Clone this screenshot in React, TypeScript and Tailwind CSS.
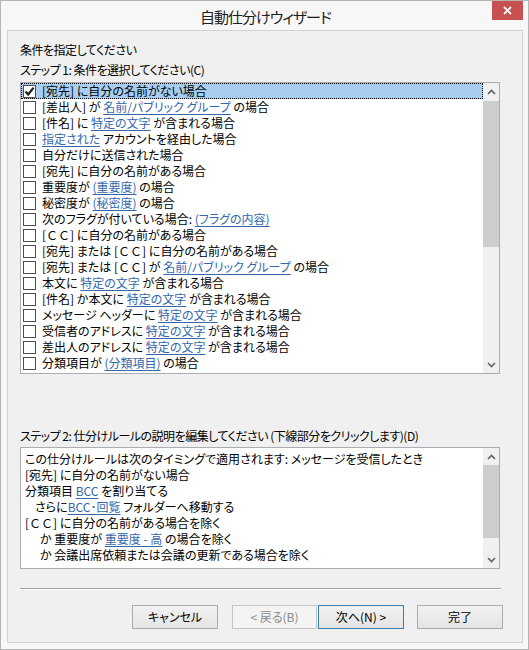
import React from 'react';

type Seg = string | { l: string };

const FONT = "[font-family:'Noto_Sans_CJK_JP',sans-serif] [font-feature-settings:'palt']";
const LINK = 'text-[#3467ad] underline underline-offset-[2px] decoration-[#3467ad]';

const conditions: Seg[][] = [
  ['[宛先] に自分の名前がない場合'],
  ['[差出人] が ', { l: '名前/パブリック グループ' }, ' の場合'],
  ['[件名] に ', { l: '特定の文字' }, ' が含まれる場合'],
  [{ l: '指定された' }, ' アカウントを経由した場合'],
  ['自分だけに送信された場合'],
  ['[宛先] に自分の名前がある場合'],
  ['重要度が ', { l: '(重要度)' }, ' の場合'],
  ['秘密度が ', { l: '(秘密度)' }, ' の場合'],
  ['次のフラグが付いている場合: ', { l: '(フラグの内容)' }],
  ['[ＣＣ] に自分の名前がある場合'],
  ['[宛先] または [ＣＣ] に自分の名前がある場合'],
  ['[宛先] または [ＣＣ] が ', { l: '名前/パブリック グループ' }, ' の場合'],
  ['本文に ', { l: '特定の文字' }, ' が含まれる場合'],
  ['[件名] か本文に ', { l: '特定の文字' }, ' が含まれる場合'],
  ['メッセージ ヘッダーに ', { l: '特定の文字' }, ' が含まれる場合'],
  ['受信者のアドレスに ', { l: '特定の文字' }, ' が含まれる場合'],
  ['差出人のアドレスに ', { l: '特定の文字' }, ' が含まれる場合'],
  ['分類項目が ', { l: '(分類項目)' }, ' の場合'],
];

const description: { indent: string; segs: Seg[] }[] = [
  { indent: '', segs: ['この仕分けルールは次のタイミングで適用されます: メッセージを受信したとき'] },
  { indent: '', segs: ['[宛先] に自分の名前がない場合'] },
  { indent: '', segs: ['分類項目 ', { l: 'BCC' }, ' を割り当てる'] },
  { indent: 'pl-[10px]', segs: ['さらに', { l: 'BCC･回覧' }, ' フォルダーへ移動する'] },
  { indent: '', segs: ['[ＣＣ] に自分の名前がある場合を除く'] },
  { indent: 'pl-[15px]', segs: ['か 重要度が ', { l: '重要度 - 高' }, ' の場合を除く'] },
  { indent: 'pl-[15px]', segs: ['か 会議出席依頼または会議の更新である場合を除く'] },
];

// full-width "ＣＣ" keeps its full width, like the original dialog
const Plain = ({ text }: { text: string }) => {
  const parts = text.split('ＣＣ');
  return (
    <span className="whitespace-pre">
      {parts.map((p, i) => (
        <React.Fragment key={i}>
          {p}
          {i < parts.length - 1 && (
            <span className="[font-feature-settings:normal]">ＣＣ</span>
          )}
        </React.Fragment>
      ))}
    </span>
  );
};

const Segs = ({ segs }: { segs: Seg[] }) => (
  <>
    {segs.map((s, i) =>
      typeof s === 'string' ? (
        <Plain key={i} text={s} />
      ) : (
        <span key={i} className={LINK}>{s.l}</span>
      )
    )}
  </>
);

const Chevron = ({ up }: { up?: boolean }) => (
  <svg width="9" height="6" viewBox="0 0 9 6">
    <path
      d={up ? 'M1 5 L4.5 1.5 L8 5' : 'M1 1 L4.5 4.5 L8 1'}
      fill="none"
      stroke="#606060"
      strokeWidth="1.6"
    />
  </svg>
);

const ScrollBar = ({ thumbTop, thumbH }: { thumbTop: string; thumbH: string }) => (
  <div className="w-[16px] h-full bg-[#f0f0f0] flex flex-col">
    <div className="h-[17px] flex items-center justify-center">
      <Chevron up />
    </div>
    <div className={`${thumbTop} ${thumbH} bg-[#cdcdcd]`} />
    <div className="flex-1" />
    <div className="h-[17px] flex items-center justify-center">
      <Chevron />
    </div>
  </div>
);

const CheckBox = ({ checked }: { checked?: boolean }) => (
  <div className="ml-[2px] w-[13px] h-[13px] shrink-0 border border-[#4d4d4d] bg-white flex items-center justify-center">
    {checked && (
      <svg width="11" height="11" viewBox="0 0 11 11">
        <path d="M1.5 5.5 L4.2 8.5 L9.5 1.8" fill="none" stroke="#222" strokeWidth="2.2" />
      </svg>
    )}
  </div>
);

const Button = ({
  label,
  w,
  variant,
}: {
  label: string;
  w: string;
  variant?: 'default' | 'disabled';
}) => {
  const tone =
    variant === 'disabled'
      ? 'border-[#c4c4c4] bg-[#f4f4f4] text-[#8a8a8a]'
      : variant === 'default'
      ? 'border-[#3c7fb1] bg-gradient-to-b from-[#f2f2f2] to-[#e4e4e4] text-black'
      : 'border-[#acacac] bg-gradient-to-b from-[#f2f2f2] to-[#e4e4e4] text-black';
  return (
    <div className={`${w} h-[24px] border ${tone} flex items-center justify-center text-[12px]`}>
      {label}
    </div>
  );
};

export default function App() {
  return (
    <div
      className={`${FONT} w-[529px] h-[650px] border border-[#b4b4b4] bg-[#f7f7f7] flex flex-col text-black`}
    >
      {/* title bar */}
      <div className="h-[29px] flex items-start relative">
        <div className="flex-1 text-center text-[15px] leading-[31px] tracking-[-1px] text-[#1c1c1c] pl-[2px]">
          自動仕分けウィザード
        </div>
        <div className="absolute right-[5px] top-0 w-[31px] h-[19px] bg-[#c75050] flex items-center justify-center">
          <svg width="9" height="9" viewBox="0 0 9 9">
            <path d="M1 1 L8 8 M8 1 L1 8" stroke="white" strokeWidth="1.8" />
          </svg>
        </div>
      </div>

      {/* panel */}
      <div className="ml-[6px] mr-[5px] mb-[6px] h-[613px] border border-[#d2d2d2] bg-[#f0f0f0] pl-[12px] pr-[19px] pt-[9px] flex flex-col text-[12px]">
        <div className="leading-[20px] tracking-[-0.5px]">条件を指定してください</div>
        <div className="leading-[20px] tracking-[-0.5px]">ステップ 1: 条件を選択してください(C)</div>

        <div className="mt-[2px] w-[480px] h-[292px] border border-[#abadb3] bg-white flex">
          <div className="flex-1 flex flex-col">
            {conditions.map((segs, i) => (
              <div
                key={i}
                className={`h-[16px] shrink-0 flex items-center leading-[16px] whitespace-nowrap ${
                  i === 0
                    ? 'bg-[#a7cdf0] outline-1 outline-dotted outline-black outline-offset-[-1px]'
                    : ''
                }`}
              >
                <CheckBox checked={i === 0} />
                <div className="ml-[6px]">
                  <Segs segs={segs} />
                </div>
              </div>
            ))}
          </div>
          <ScrollBar thumbTop="mt-[1px]" thumbH="h-[146px]" />
        </div>

        <div className="mt-[52px] leading-[20px] tracking-[-0.5px]">
          ステップ 2: 仕分けルールの説明を編集してください (下線部分をクリックします)(D)
        </div>

        <div className="mt-[1px] w-[480px] h-[122px] border border-[#abadb3] bg-white flex">
          <div className="flex-1 pt-[3px] pl-[4px] flex flex-col">
            {description.map((line, i) => (
              <div key={i} className={`h-[16px] leading-[16px] whitespace-nowrap ${line.indent}`}>
                <Segs segs={line.segs} />
              </div>
            ))}
          </div>
          <ScrollBar thumbTop="mt-0" thumbH="h-[73px]" />
        </div>

        <div className="mt-[19px] w-[481px] border-t border-[#a0a0a0] border-b border-b-white" />

        <div className="mt-[15px] flex justify-end">
          <Button label="キャンセル" w="w-[86px]" />
          <div className="w-[14px]" />
          <Button label="< 戻る(B)" w="w-[85px]" variant="disabled" />
          <div className="w-[1px]" />
          <Button label="次へ(N) >" w="w-[86px]" variant="default" />
          <div className="w-[13px]" />
          <Button label="完了" w="w-[86px]" />
        </div>
      </div>
    </div>
  );
}
